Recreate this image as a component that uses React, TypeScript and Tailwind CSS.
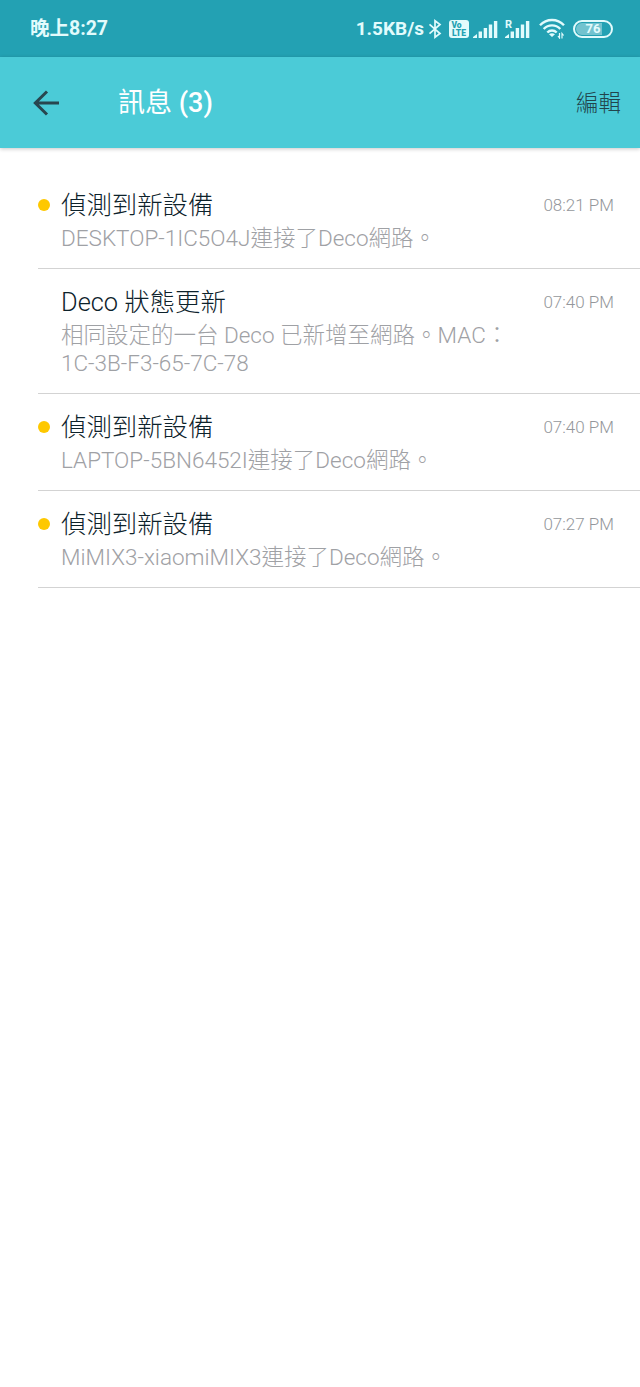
import React from 'react';

const messages = [
    { title: '偵測到新設備', lines: ['DESKTOP-1IC5O4J連接了Deco網路。'], time: '08:21 PM', unread: true },
    { title: 'Deco 狀態更新', lines: ['相同設定的一台 Deco 已新增至網路。MAC：', '1C-3B-F3-65-7C-78'], time: '07:40 PM', unread: false },
    { title: '偵測到新設備', lines: ['LAPTOP-5BN6452I連接了Deco網路。'], time: '07:40 PM', unread: true },
    { title: '偵測到新設備', lines: ['MiMIX3-xiaomiMIX3連接了Deco網路。'], time: '07:27 PM', unread: true },
];

function SignalBars() {
    return (
        <svg width="25" height="18" viewBox="0 0 25 18" fill="currentColor">
            <path d="M0 18v-1l4-3v4z" />
            <rect x="5.6" y="11.5" width="3.4" height="6.5" />
            <rect x="10.7" y="8" width="3.4" height="10" />
            <rect x="15.8" y="4.5" width="3.4" height="13.5" />
            <rect x="20.9" y="1" width="3.4" height="17" />
        </svg>
    );
}

function StatusBar() {
    return (
        <div className="h-[57px] bg-[#23a1b3] text-[#e2fbfc] flex items-center justify-between pl-[30px] pr-[27px]">
            <span className="text-[19.5px] leading-6 font-bold">晚上8:27</span>
            <div className="flex items-center">
                <span className="text-[19px] leading-6 font-bold mr-[4px]">1.5KB/s</span>
                <svg className="mr-[7px]" width="14" height="20" viewBox="0 0 14 20" fill="none" stroke="currentColor" strokeWidth="1.7">
                    <path d="M1.5 5.3 12 14.5 7 18.2V1.8l5 3.7L1.5 14.7" />
                </svg>
                <div className="w-5 h-[18px] mr-[4px] rounded-[3px] bg-[#e2fbfc] text-[#23a1b3] flex flex-col items-center justify-center text-[8.5px] leading-[8px] font-black">
                    <span className="mr-[5px]">Vo</span>
                    <span>LTE</span>
                </div>
                <div className="mr-[7px]">
                    <SignalBars />
                </div>
                <div className="relative mr-[9px]">
                    <SignalBars />
                    <span className="absolute left-0 -top-[1px] text-[11px] leading-[11px] font-bold">R</span>
                </div>
                <svg className="mr-[8px]" width="26" height="21" viewBox="0 0 26 21" fill="none" stroke="currentColor" strokeWidth="2.4">
                    <path d="M1 7.3c6.6-7 17.4-7 24 0" />
                    <path d="M4.7 11c4.6-4.8 12-4.8 16.6 0" />
                    <path d="M8.3 14.5c2.7-2.7 6.7-2.7 9.4 0" />
                    <path d="M10 16.3c1.7-1.4 4.3-1.4 6 0L13 19z" fill="currentColor" stroke="none" />
                    <path d="M20.5 15v5l-1.5-2M23 20.5v-5l1.6 2" strokeWidth="1.2" />
                </svg>
                <div className="w-10 h-[18px] rounded-full border-2 border-[#e2fbfc] p-px flex">
                    <div className="flex-1 rounded-full bg-linear-to-r from-[#72c3cf] from-76% to-[#23a1b3] to-76% flex items-center justify-center text-[13px] leading-[14px] font-bold">
                        76
                    </div>
                </div>
            </div>
        </div>
    );
}

export default function App() {
    return (
        <div className="min-h-[1387px] bg-white font-['Roboto','Noto_Sans_CJK_TC',sans-serif]">
            <StatusBar />
            <header className="relative h-[91px] bg-[#4bcbd7] flex items-center pl-[33px] pr-[19px] shadow-[0_1px_4px_rgba(0,0,0,0.22)]">
                <svg width="27" height="26" viewBox="0 0 27 26" fill="none" stroke="#28464f" strokeWidth="3">
                    <path d="M26 13H3M14 1.5 2.3 13 14 24.5" />
                </svg>
                <h1 className="ml-[58px] text-[27px] leading-8 font-medium text-white">
                    <span className="font-normal">訊息</span> (3)
                </h1>
                <button className="ml-auto text-[22.5px] leading-8 font-light text-[#22444b]">編輯</button>
            </header>
            <main className="pt-6 pl-[38px]">
                {messages.map((message, index) => (
                    <div key={index} className="pt-[18px] pb-4 border-b border-[#d3d3d3]">
                        <div className="flex items-center h-[30px] pr-[26px]">
                            <div className={`w-3 h-3 mr-[11px] rounded-full ${message.unread ? 'bg-[#fec800]' : ''}`} />
                            <h2 className="text-[25.4px] leading-[30px] font-light text-[#0d222b]">{message.title}</h2>
                            <span className="ml-auto text-[17px] leading-[30px] font-light text-[#94979b]">{message.time}</span>
                        </div>
                        <div className="mt-1 pl-[23px] text-[22.5px] leading-7 font-light text-[#9fa1a5]">
                            {message.lines.map((line) => (
                                <p key={line} className="whitespace-nowrap">{line}</p>
                            ))}
                        </div>
                    </div>
                ))}
            </main>
        </div>
    );
}
